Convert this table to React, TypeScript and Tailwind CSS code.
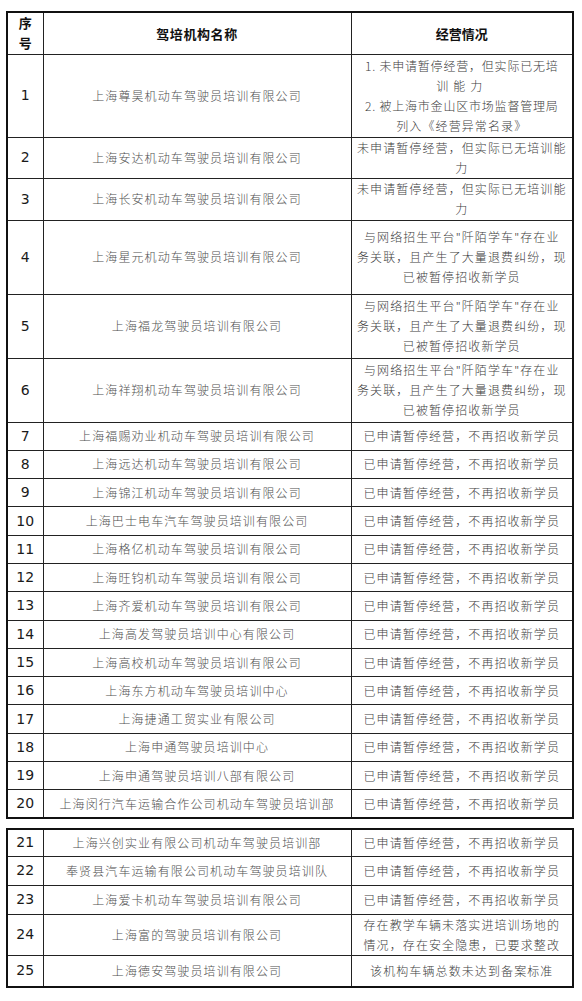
import React from "react";

type Row = {
  no: number;
  name: string;
  status: React.ReactNode;
  h: string;
};

const STOP = "已申请暂停经营，不再招收新学员";

const PLATFORM = (
  <>
    与网络招生平台"阡陌学车"存在业
    <br />
    务关联，且产生了大量退费纠纷，现
    <br />
    已被暂停招收新学员
  </>
);

const NO_ABILITY = (
  <>
    未申请暂停经营，但实际已无培训能
    <br />
    力
  </>
);

const firstTable: Row[] = [
  {
    no: 1,
    name: "上海尊昊机动车驾驶员培训有限公司",
    h: "h-[83px]",
    status: (
      <>
        <span className="whitespace-nowrap tracking-[0.8px]">1. 未申请暂停经营，但实际已无培</span>
        <br />
        <span className="tracking-[5px]">训能力</span>
        <br />
        <span className="whitespace-nowrap tracking-[0.8px]">2. 被上海市金山区市场监督管理局</span>
        <br />
        列入《经营异常名录》
      </>
    ),
  },
  { no: 2, name: "上海安达机动车驾驶员培训有限公司", h: "h-[41px]", status: NO_ABILITY },
  { no: 3, name: "上海长安机动车驾驶员培训有限公司", h: "h-[42px]", status: NO_ABILITY },
  { no: 4, name: "上海星元机动车驾驶员培训有限公司", h: "h-[74px]", status: PLATFORM },
  { no: 5, name: "上海福龙驾驶员培训有限公司", h: "h-[64px]", status: PLATFORM },
  { no: 6, name: "上海祥翔机动车驾驶员培训有限公司", h: "h-[64px]", status: PLATFORM },
  { no: 7, name: "上海福赐劝业机动车驾驶员培训有限公司", h: "h-[28.3px]", status: STOP },
  { no: 8, name: "上海远达机动车驾驶员培训有限公司", h: "h-[28.3px]", status: STOP },
  { no: 9, name: "上海锦江机动车驾驶员培训有限公司", h: "h-[28.3px]", status: STOP },
  { no: 10, name: "上海巴士电车汽车驾驶员培训有限公司", h: "h-[28.3px]", status: STOP },
  { no: 11, name: "上海格亿机动车驾驶员培训有限公司", h: "h-[28.3px]", status: STOP },
  { no: 12, name: "上海旺钧机动车驾驶员培训有限公司", h: "h-[28.3px]", status: STOP },
  { no: 13, name: "上海齐爱机动车驾驶员培训有限公司", h: "h-[28.3px]", status: STOP },
  { no: 14, name: "上海高发驾驶员培训中心有限公司", h: "h-[28.3px]", status: STOP },
  { no: 15, name: "上海高校机动车驾驶员培训有限公司", h: "h-[28.3px]", status: STOP },
  { no: 16, name: "上海东方机动车驾驶员培训中心", h: "h-[28.3px]", status: STOP },
  { no: 17, name: "上海捷通工贸实业有限公司", h: "h-[28.3px]", status: STOP },
  { no: 18, name: "上海申通驾驶员培训中心", h: "h-[28.3px]", status: STOP },
  { no: 19, name: "上海申通驾驶员培训八部有限公司", h: "h-[28.3px]", status: STOP },
  { no: 20, name: "上海闵行汽车运输合作公司机动车驾驶员培训部", h: "h-[28.3px]", status: STOP },
];

const secondTable: Row[] = [
  { no: 21, name: "上海兴创实业有限公司机动车驾驶员培训部", h: "h-[27px]", status: STOP },
  { no: 22, name: "奉贤县汽车运输有限公司机动车驾驶员培训队", h: "h-[29px]", status: STOP },
  { no: 23, name: "上海爱卡机动车驾驶员培训有限公司", h: "h-[29px]", status: STOP },
  {
    no: 24,
    name: "上海富的驾驶员培训有限公司",
    h: "h-[41px]",
    status: (
      <>
        存在教学车辆未落实进培训场地的
        <br />
        情况，存在安全隐患，已要求整改
      </>
    ),
  },
  { no: 25, name: "上海德安驾驶员培训有限公司", h: "h-[32px]", status: "该机构车辆总数未达到备案标准" },
];

const cjk = "font-['Noto_Sans_CJK_SC','Noto_Sans',sans-serif]";
const num = "font-['DejaVu_Sans','Noto_Sans',sans-serif]";

function Body({ rows }: { rows: Row[] }) {
  return (
    <tbody>
      {rows.map((r) => (
        <tr key={r.no} className={r.h}>
          <td className={`border border-[#222] p-0 text-center text-[14px] text-[#1a1a1a] ${num}`}>
            {r.no}
          </td>
          <td
            className={`border border-[#222] p-0 text-center text-[12px] font-light tracking-[1.1px] text-[#505050] ${cjk}`}
          >
            {r.name}
          </td>
          <td
            className={`border border-[#222] p-0 text-center text-[12px] leading-[20px] font-light tracking-[1.1px] text-[#404040] ${cjk}`}
          >
            {r.status}
          </td>
        </tr>
      ))}
    </tbody>
  );
}

function Cols() {
  return (
    <colgroup>
      <col className="w-[36px]" />
      <col className="w-[308px]" />
      <col className="w-[222px]" />
    </colgroup>
  );
}

export default function App() {
  return (
    <div className="min-h-[1001px] w-[582px] bg-white pl-[6px] pt-[11px]">
      <table className="w-[568px] table-fixed border-collapse border-2 border-[#111]">
        <Cols />
        <thead>
          <tr className="h-[42px]">
            <th
              className={`border border-[#222] p-0 text-center text-[13px] leading-[20px] font-bold text-[#111] ${cjk}`}
            >
              序
              <br />
              号
            </th>
            <th
              className={`border border-[#222] p-0 text-center text-[13px] font-bold tracking-[0.6px] text-[#111] ${cjk}`}
            >
              驾培机构名称
            </th>
            <th
              className={`border border-[#222] p-0 text-center text-[13px] font-bold text-[#111] ${cjk}`}
            >
              经营情况
            </th>
          </tr>
        </thead>
        <Body rows={firstTable} />
      </table>

      <div className="h-[9px]" />

      <table className="w-[568px] table-fixed border-collapse border-2 border-[#111]">
        <Cols />
        <Body rows={secondTable} />
      </table>
    </div>
  );
}
